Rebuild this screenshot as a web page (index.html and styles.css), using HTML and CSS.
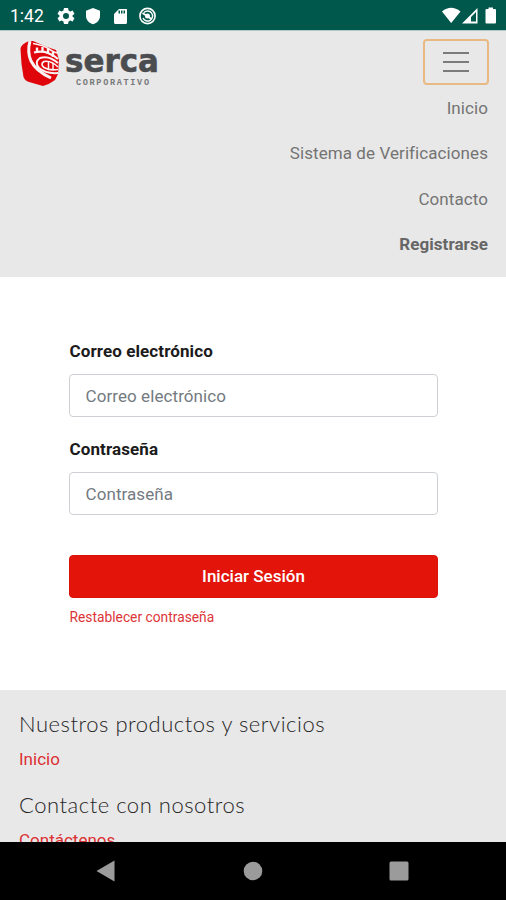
FILE: index.html
```
<!DOCTYPE html>
<html lang="es">
<head>
<meta charset="utf-8">
<meta name="viewport" content="width=device-width, initial-scale=1">
<title>Serca Corporativo</title>
<link rel="stylesheet" href="styles.css">
</head>
<body>
<div class="screen">
  <div class="status">
    <span class="clock">1:42</span>
    <svg class="status-left" width="106" height="22" viewBox="0 0 106 22" fill="#fff">
      <g transform="translate(10 11)">
        <path fill-rule="evenodd" d="M-2-8H2L2.6-5.5 4.3-4.6 6.7-5.4 8.5-2 6.6-.8V.8L8.5 2 6.7 5.4 4.3 4.6 2.6 5.5 2 8H-2L-2.6 5.5-4.3 4.6-6.7 5.4-8.5 2-6.6 .8V-.8L-8.5-2-6.7-5.4-4.3-4.6-2.6-5.5ZM0-3A3 3 0 1 0 0 3 3 3 0 1 0 0-3Z"/>
      </g>
      <path d="M37 3L44 5.8V11C44 15 41 18 37 19.3 33 18 30 15 30 11V5.8Z"/>
      <path fill-rule="evenodd" d="M63 4H70.5Q71 4 71 5V17.5Q71 19 69.500 19H59.500Q58 19 58 17.500V9ZM62.500 5.500V8.500H64V5.500ZM65 5.500V8.500H66.500V5.500ZM67.500 5.500V8.500H69V5.500Z"/>
      <g fill="none" stroke="#fff">
        <circle cx="91.500" cy="11" r="7.600" stroke-width="1.600"/>
        <path d="M88 7.500A5 5 0 1 1 87 13" stroke-width="1.500"/>
        <path d="M86.500 8L95.500 14" stroke-width="1.800"/>
      </g>
      <circle cx="91.500" cy="11" r="2.500"/>
    </svg>
    <svg class="status-right" width="56" height="20" viewBox="0 0 56 20" fill="#fff">
      <path d="M0 6.500Q9-1 18.500 6.500L9.200 18Z"/>
      <path fill-rule="evenodd" d="M20 18.500L35.500 3V18.500ZM29 12V16.500H34V7Z"/>
      <path d="M46.500 2.500H51V4H53Q54 4 54 5V17.500Q54 18.500 53 18.500H44.500Q43.500 18.500 43.500 17.500V5Q43.500 4 44.500 4H46.500Z"/>
    </svg>
  </div>

  <header class="header">
    <div class="header-top">
      <svg class="logo" width="142" height="48" viewBox="0 0 142 48">
        <path fill="#df050b" d="M9 1Q1 4 .5 9L1.500 24 3.500 37Q5 41 9 42L23 46Q30 44 35 40L38 34 39 20 36 10 27 7 13 1Z"/>
        <g fill="none" stroke="#fbf3f3">
          <path d="M10 1Q7 12 11 21 16 31 31 38" stroke-width="3"/>
          <path d="M14 12.500Q22 10.500 28 13T38 19" stroke-width="2.200"/>
          <path d="M13 3.500Q23 5 29 9T38 13" stroke-width="1.600"/>
          <path d="M17 7.500V12M22.500 7V12M28 9V14M33 12V17" stroke-width="2.400"/>
          <path d="M38 23Q29 15 20 18 14 22 19 28 26 34 38 33" stroke-width="2"/>
          <path d="M38 27Q31 20 24 21.500 20 24 24 27.500 30 31 38 29.500" stroke-width="1.700"/>
          <path d="M28.500 22V29M33 23V30" stroke-width="1.500"/>
        </g>
        <text class="brand" x="45" y="32" textLength="94" lengthAdjust="spacingAndGlyphs">serca</text>
        <text class="brand-sub" x="56" y="44.500" textLength="73" lengthAdjust="spacing">CORPORATIVO</text>
      </svg>
      <button class="toggler" aria-label="Menú"><i></i><i></i><i></i></button>
    </div>
    <nav class="nav">
      <a>Inicio</a>
      <a>Sistema de Verificaciones</a>
      <a>Contacto</a>
      <a class="strong">Registrarse</a>
    </nav>
  </header>

  <form class="login">
    <label for="mail">Correo electrónico</label>
    <input id="mail" type="text" placeholder="Correo electrónico">
    <label for="pass">Contraseña</label>
    <input id="pass" type="password" placeholder="Contraseña">
    <button class="submit" type="button">Iniciar Sesión</button>
    <a class="reset">Restablecer contraseña</a>
  </form>

  <footer class="footer">
    <h2>Nuestros productos y servicios</h2>
    <a>Inicio</a>
    <h2>Contacte con nosotros</h2>
    <a>Contáctenos</a>
  </footer>

  <div class="system-nav">
    <svg width="20" height="22" viewBox="0 0 20 22"><path fill="#9b9b9b" d="M.500 11L18.500 .500V21.500Z"/></svg>
    <svg width="20" height="20" viewBox="0 0 20 20"><circle fill="#9b9b9b" cx="10" cy="10" r="9.300"/></svg>
    <svg width="20" height="20" viewBox="0 0 20 20"><rect fill="#9b9b9b" x=".500" y=".500" width="19" height="19" rx="1.500"/></svg>
  </div>
</div>
</body>
</html>
```
FILE: styles.css
```
* { box-sizing: border-box; }
body { margin: 0; font-family: Roboto, "Liberation Sans", sans-serif; font-size: 17px; background: #fff; }
.screen { width: 506px; height: 900px; display: flex; flex-direction: column; overflow: hidden; }
.status { flex: none; height: 30px; padding: 0 8px 0 10px; background: #00574b; display: flex; align-items: center; color: #fff; }
.clock { font-size: 17.500px; line-height: 30px; width: 46px; padding-top: 2px; }
.status-left { margin-top: 1px; }
.status-right { margin-left: auto; }
.header { flex: none; height: 247px; background: #e8e8e8; padding: 9px 17px 0 20px; border-top: 1px solid #b4c9c5; }
.header-top { display: flex; justify-content: space-between; height: 46px; }
.logo { display: block; overflow: visible; }
.brand { font: 700 32px "DejaVu Sans", sans-serif; fill: #4b4c4f; stroke: #4b4c4f; stroke-width: .6px; }
.brand-sub { font: 700 8.500px "Liberation Mono", monospace; fill: #77787a; }
.toggler { width: 66px; height: 46px; margin: -1px 0 0; border: 2px solid #e8b983; border-radius: 4px; background: none; padding: 0; display: flex; flex-direction: column; align-items: center; justify-content: center; gap: 7px; }
.toggler i { display: block; width: 26px; height: 2px; background: #7b7b7b; }
.nav { display: flex; flex-direction: column; align-items: flex-end; text-align: right; padding-right: 1px; }
.nav a { height: 45.400px; line-height: 45px; color: #747474; letter-spacing: .08px; }
.nav .strong { color: #666; font-weight: 700; }
.login { flex: none; height: 413px; padding: 62px 68px 0 69px; display: flex; flex-direction: column; }
.login label { line-height: 25px; font-weight: 700; color: #1b1b1b; margin-bottom: 10px; letter-spacing: .1px; padding-left: .5px; }
.login input { height: 43px; flex: none; border: 1px solid #cdd1d5; border-radius: 4px; padding: 0 15.500px; margin-bottom: 20.400px; font: inherit; letter-spacing: .08px; background: #fff; }
.login input::placeholder { color: #737a81; opacity: 1; }
.submit { height: 43px; flex: none; margin-top: 19px; border: 1px solid #d9130b; border-radius: 4px; background: #e3140a; color: #fff; font: 500 17px Roboto, sans-serif; }
.reset { font-size: 13.800px; line-height: 20px; margin-top: 9px; color: #dc3537; padding-left: .5px; }
.footer { flex: none; height: 152px; overflow: hidden; background: #e8e8e8; padding: 20px 19px 0; display: flex; flex-direction: column; align-items: flex-start; }
.footer h2 { margin: 0; font: 300 22px/28px Lato, sans-serif; letter-spacing: .53px; color: #262626; white-space: nowrap; }
.footer a { line-height: 25px; margin: 9px 0 19px; color: #dc3033; }
.system-nav { flex: 1; background: #000; display: flex; justify-content: space-between; align-items: center; padding: 0 97px 0 96px; }
```
